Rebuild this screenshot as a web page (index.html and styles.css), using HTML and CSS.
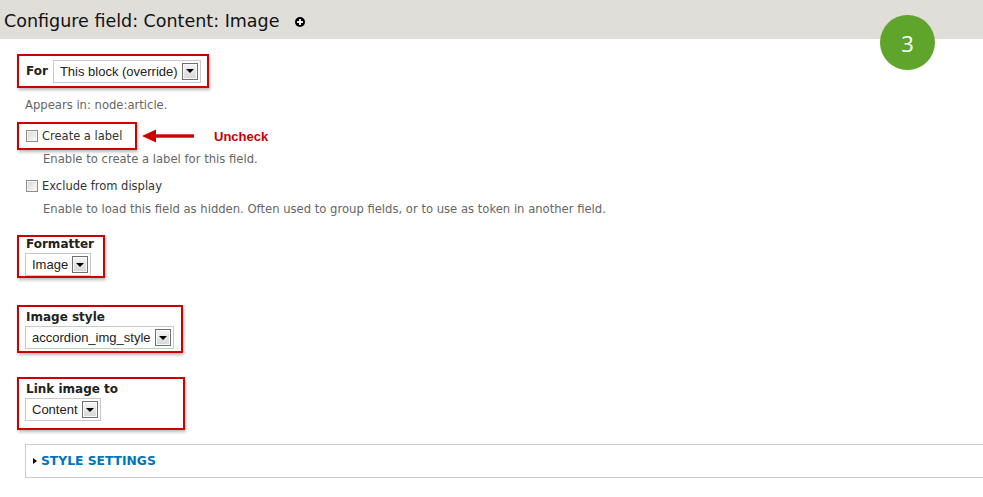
FILE: index.html
```html
<!DOCTYPE html>
<html lang="en">
<head>
<meta charset="utf-8">
<title>Configure field: Content: Image</title>
<link rel="stylesheet" href="styles.css">
</head>
<body>
<header class="title-bar">
  <h1 class="title">Configure field: Content: Image</h1>
  <svg class="plus-icon" width="10" height="10" viewBox="0 0 10 10" aria-hidden="true">
    <circle cx="5" cy="5" r="5" fill="#000"/>
    <rect x="2" y="4.1" width="6" height="1.8" fill="#fff"/>
    <rect x="4.1" y="2" width="1.8" height="6" fill="#fff"/>
  </svg>
</header>
<div class="badge">3</div>
<main class="form">
  <div class="callout callout-for">
    <span class="inline-label">For</span>
    <div class="select"><span class="select-text">This block (override)</span><span class="select-btn"><span class="caret"></span></span></div>
  </div>
  <p class="desc desc-first">Appears in: node:article.</p>

  <div class="check-row">
    <div class="callout callout-check">
      <span class="checkbox"></span><span class="check-label">Create a label</span>
    </div>
    <svg class="arrow" width="52" height="14" viewBox="0 0 52 14" aria-hidden="true">
      <polygon points="0,7 14,0.5 14,13.5" fill="#c00"/>
      <rect x="13" y="5.3" width="39" height="3.4" fill="#c00"/>
    </svg>
    <span class="note">Uncheck</span>
  </div>
  <p class="desc desc-indent desc-tight">Enable to create a label for this field.</p>

  <div class="plain-check">
    <span class="checkbox"></span><span class="check-label">Exclude from display</span>
  </div>
  <p class="desc desc-indent desc-after-check">Enable to load this field as hidden. Often used to group fields, or to use as token in another field.</p>

  <div class="callout callout-field callout-formatter">
    <span class="field-label">Formatter</span>
    <div class="select"><span class="select-text">Image</span><span class="select-btn"><span class="caret"></span></span></div>
  </div>

  <div class="callout callout-field callout-style">
    <span class="field-label">Image style</span>
    <div class="select"><span class="select-text">accordion_img_style</span><span class="select-btn"><span class="caret"></span></span></div>
  </div>

  <div class="callout callout-field callout-link">
    <span class="field-label">Link image to</span>
    <div class="select"><span class="select-text">Content</span><span class="select-btn"><span class="caret"></span></span></div>
  </div>

  <div class="fieldset">
    <span class="fs-triangle"></span><span class="fs-title">STYLE SETTINGS</span>
  </div>
</main>
</body>
</html>
```
FILE: styles.css
```css
* { box-sizing: border-box; }

body {
  margin: 0;
  width: 983px;
  height: 497px;
  overflow: hidden;
  position: relative;
  background: #fff;
  font-family: "DejaVu Sans", sans-serif;
  color: #333;
}

.title-bar {
  height: 39px;
  background: #dfded8;
  display: flex;
  align-items: center;
  padding: 4px 0 0 4px;
}

.title {
  margin: 0;
  font-weight: normal;
  font-size: 17.5px;
  line-height: 1;
  color: #111;
}

.plus-icon {
  margin-left: 16px;
  flex: none;
}

.badge {
  position: absolute;
  left: 880px;
  top: 15px;
  width: 55px;
  height: 55px;
  border-radius: 50%;
  background: #5fa42b;
  color: #fff;
  font: 22px "Open Sans", sans-serif;
  display: flex;
  align-items: center;
  justify-content: center;
}

.form {
  padding: 15px 0 0 17px;
}

.callout {
  border: 2px solid #c00;
  background: #fff;
  box-shadow: 1px 2px 3px rgba(0, 0, 0, 0.28);
}

.callout-for {
  width: 192px;
  height: 34px;
  display: flex;
  align-items: center;
  padding-left: 7px;
  gap: 5px;
}

.inline-label,
.field-label {
  font-weight: bold;
  font-size: 12px;
  color: #222;
}

.select {
  display: inline-flex;
  align-items: center;
  height: 23px;
  border: 1px solid #c9c9c9;
  background: #fff;
  padding: 0 2px 0 6px;
  gap: 4px;
  font: 13px "Liberation Sans", Arial, sans-serif;
  color: #222;
}

.select-btn {
  width: 16px;
  height: 17px;
  border: 1px solid #6f6f6f;
  background: linear-gradient(#f5f5f5, #d6d6d6);
  box-shadow: inset 0 0 0 1px #fafafa;
  display: flex;
  align-items: center;
  justify-content: center;
}

.caret {
  width: 0;
  height: 0;
  border-top: 4px solid #000;
  border-left: 4px solid transparent;
  border-right: 4px solid transparent;
}

.desc {
  margin: 8px 0 0 8px;
  font-size: 11.6px;
  line-height: 16px;
  color: #666;
}

.desc-first { margin-top: 9px; }
.desc-indent { margin-left: 26px; }
.desc-tight { margin-top: 1px; }
.desc-after-check { margin-top: 7px; }

.check-row {
  margin-top: 9px;
  display: flex;
  align-items: center;
}

.callout-check {
  width: 120px;
  height: 28px;
  display: flex;
  align-items: center;
  padding-left: 7px;
  gap: 4px;
}

.checkbox {
  width: 12px;
  height: 12px;
  flex: none;
  border: 1px solid #8e8e8e;
  background: linear-gradient(135deg, #d8d8d8, #fbfbfb);
  box-shadow: inset 0 0 0 1px #f2f2f2;
}

.check-label {
  font-size: 11.5px;
  line-height: 16px;
  color: #333;
}

.arrow {
  margin-left: 5px;
  flex: none;
}

.note {
  margin-left: 20px;
  font: bold 13px "Liberation Sans", Arial, sans-serif;
  color: #c00;
}

.plain-check {
  margin-top: 11px;
  padding-left: 9px;
  height: 16px;
  display: flex;
  align-items: center;
  gap: 4px;
}

.callout-field {
  display: flex;
  flex-direction: column;
  align-items: flex-start;
  padding-left: 6px;
}

.field-label {
  line-height: 14px;
  padding-left: 1px;
  margin-bottom: 2px;
}

.callout-formatter {
  width: 88px;
  margin-top: 18px;
  padding-top: 0;
  padding-bottom: 0;
}

.callout-style {
  width: 166px;
  margin-top: 27px;
  padding-top: 3px;
  padding-bottom: 2px;
}

.callout-link {
  width: 168px;
  margin-top: 24px;
  padding-top: 3px;
  padding-bottom: 7px;
}

.fieldset {
  margin: 14px 0 0 8px;
  width: 1000px;
  height: 34px;
  border: 1px solid #ccc;
  border-right: none;
  display: flex;
  align-items: center;
  padding-left: 7px;
  gap: 4px;
}

.fs-triangle {
  width: 0;
  height: 0;
  border-left: 4px solid #000;
  border-top: 3px solid transparent;
  border-bottom: 3px solid transparent;
}

.fs-title {
  font-weight: bold;
  font-size: 12.3px;
  color: #0074bd;
}
```
